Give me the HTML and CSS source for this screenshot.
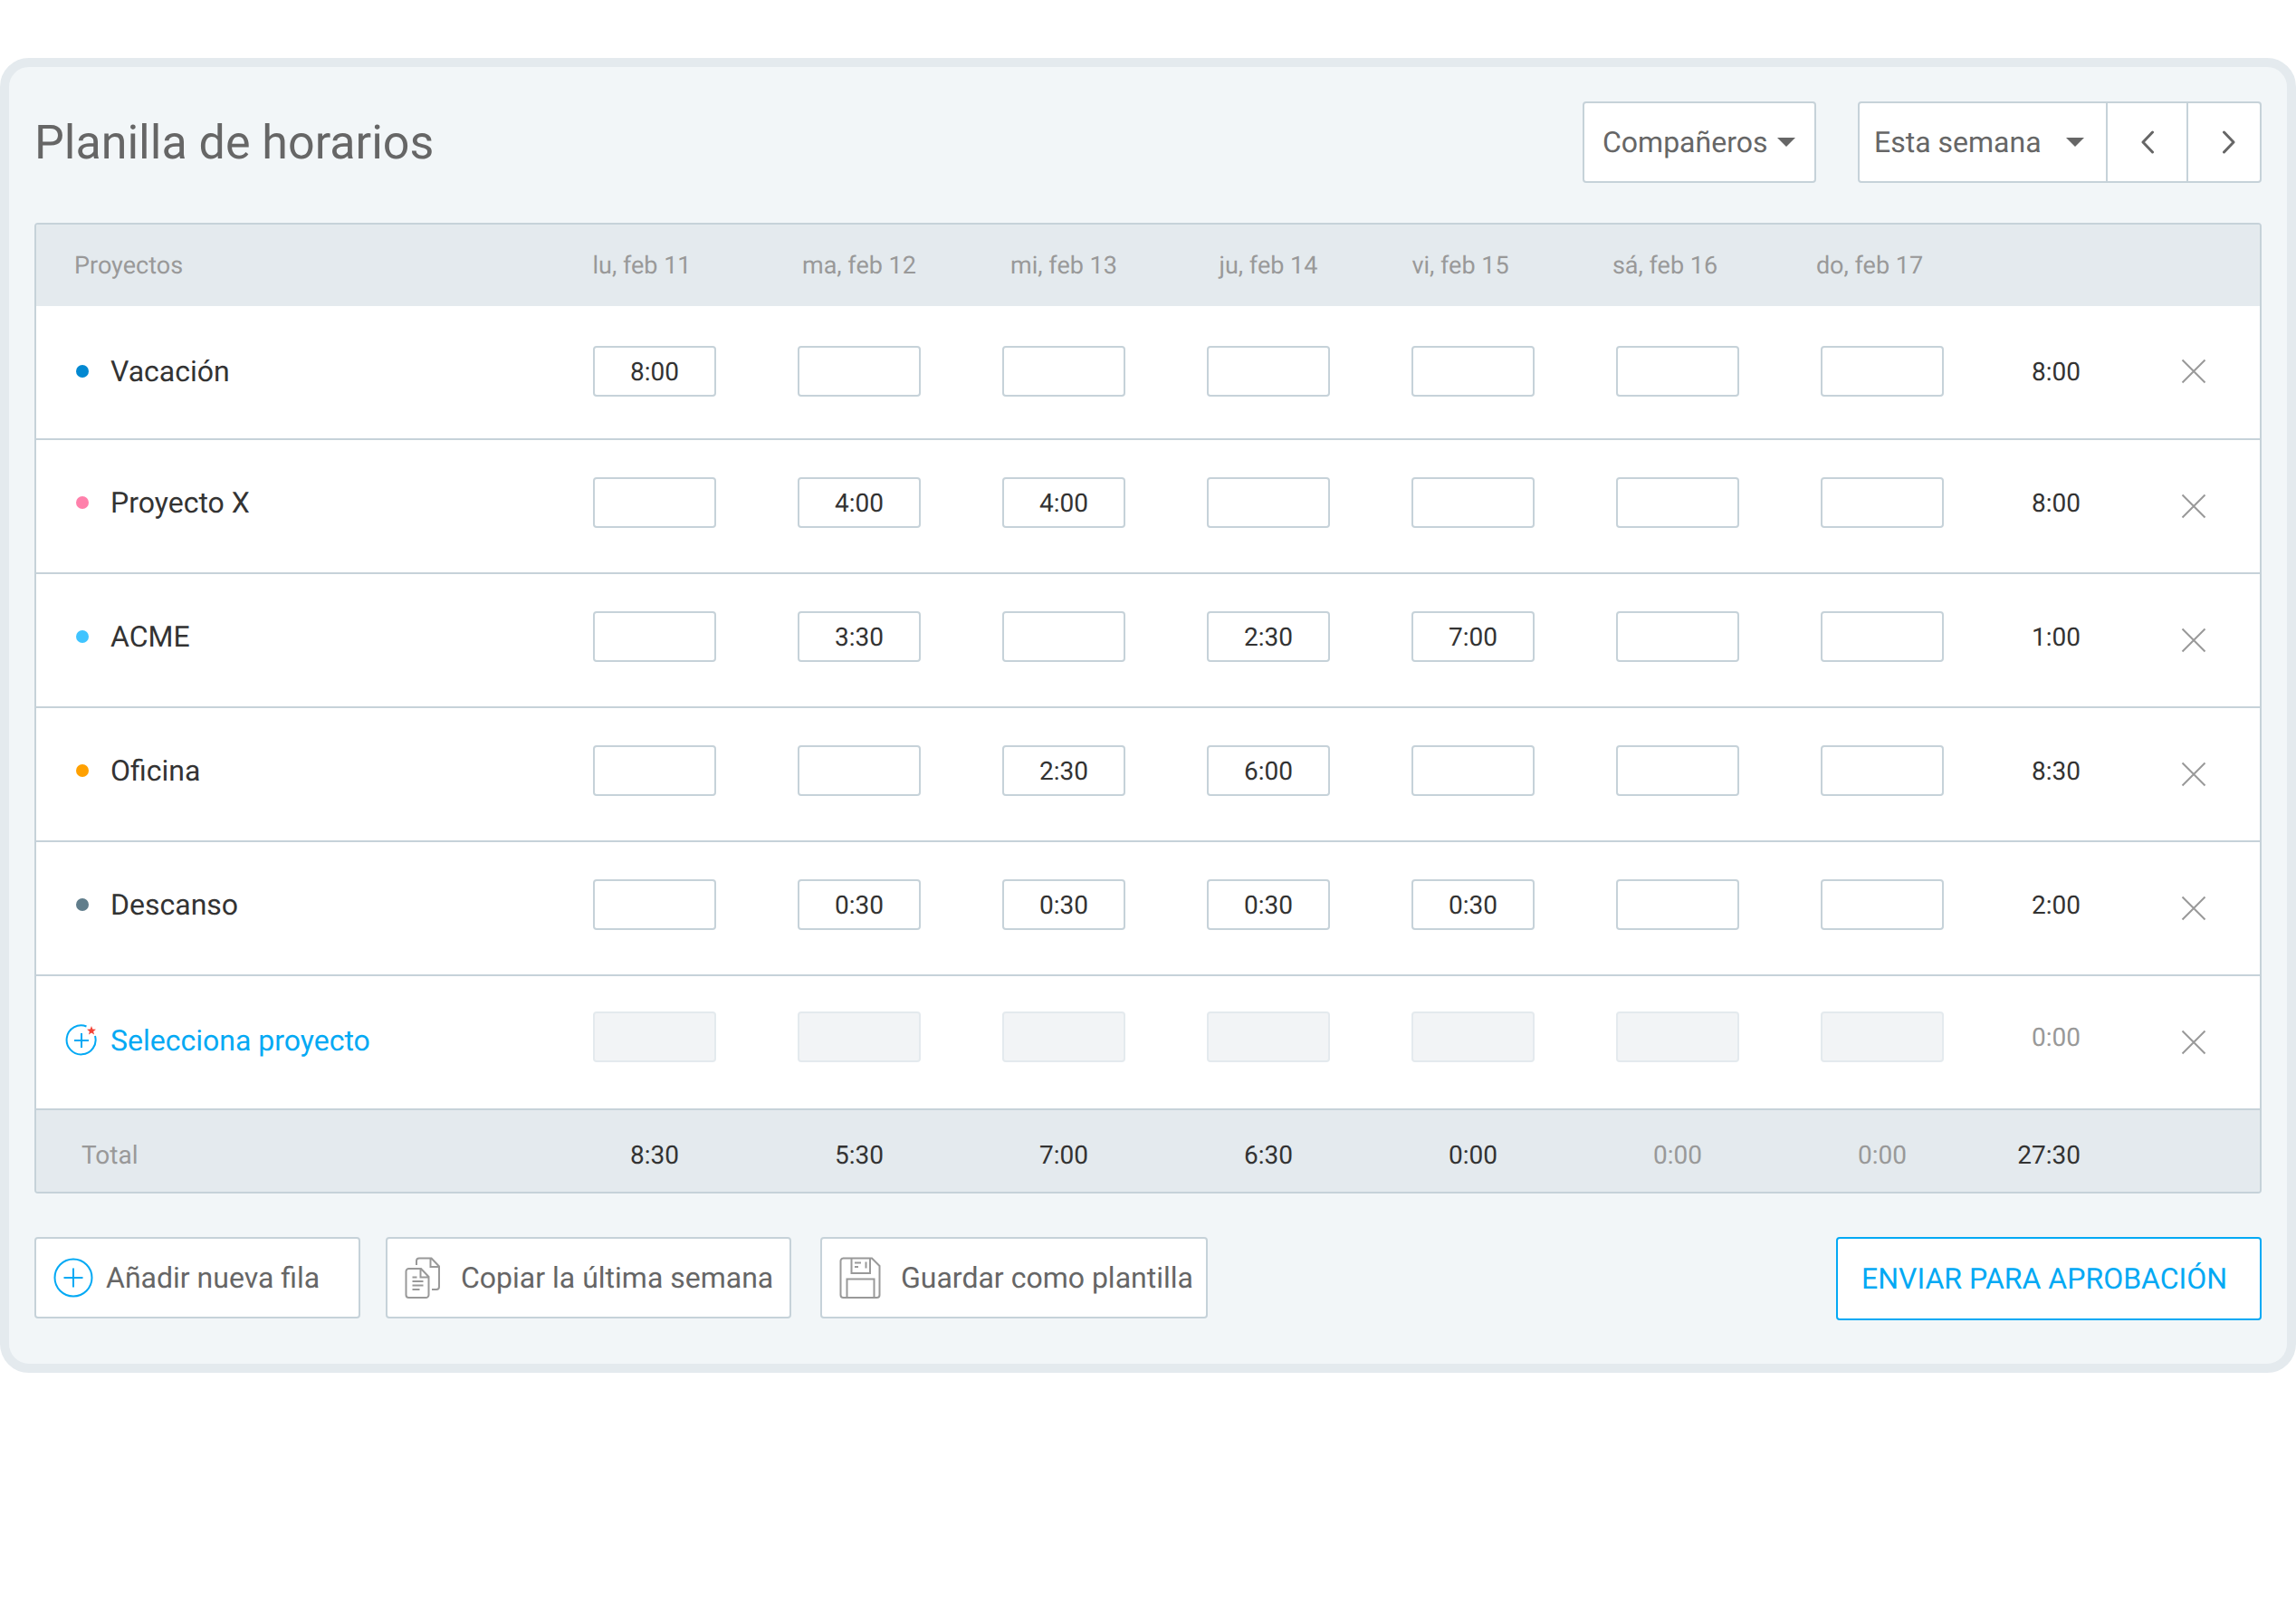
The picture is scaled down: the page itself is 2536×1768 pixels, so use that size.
FILE: index.html
```html
<!DOCTYPE html>
<html lang="es">
<head>
<meta charset="UTF-8">
<meta name="viewport" content="width=device-width, initial-scale=1.0">
<title>Planilla de horarios</title>
<link rel="stylesheet" href="styles.css">
</head>
<body>

<main class="card">
  <!-- Cabecera -->
  <header class="toolbar">
    <h1>Planilla de horarios</h1>
    <div class="select team">
      <select aria-label="Compañeros"><option>Compañeros</option></select>
      <svg class="caret" viewBox="0 0 20 10"><path d="M0 0h20L10 10z"/></svg>
    </div>
    <div class="week">
      <div class="select">
        <select aria-label="Semana"><option>Esta semana</option></select>
        <svg class="caret" viewBox="0 0 20 10"><path d="M0 0h20L10 10z"/></svg>
      </div>
      <button class="prev" aria-label="Semana anterior">
        <svg class="chevron" viewBox="0 0 14 26"><path d="M12.500 2L2 13l10.500 11"/></svg>
      </button>
      <button class="next" aria-label="Semana siguiente">
        <svg class="chevron" viewBox="0 0 14 26"><path d="M1.500 2L12 13 1.500 24"/></svg>
      </button>
    </div>
  </header>

  <!-- Tabla de horas -->
  <table class="sheet">
    <thead>
      <tr>
        <th class="name">Proyectos</th>
        <th class="day day-start">lu, feb 11</th>
        <th class="day">ma, feb 12</th>
        <th class="day">mi, feb 13</th>
        <th class="day">ju, feb 14</th>
        <th class="day day-start">vi, feb 15</th>
        <th class="day day-start">sá, feb 16</th>
        <th class="day day-start">do, feb 17</th>
        <th class="sum"></th>
        <th class="remove"></th>
      </tr>
    </thead>
    <tbody id="rows"></tbody>
    <tfoot>
      <tr>
        <td class="name">Total</td>
        <td>8:30</td>
        <td>5:30</td>
        <td>7:00</td>
        <td>6:30</td>
        <td>0:00</td>
        <td class="empty">0:00</td>
        <td class="empty">0:00</td>
        <td class="sum">27:30</td>
        <td></td>
      </tr>
    </tfoot>
  </table>

  <!-- Acciones -->
  <footer class="actions">
    <button class="btn add">
      <svg class="icon-blue" width="44" height="44" viewBox="0 0 44 44">
        <circle cx="22" cy="22" r="20.500"/>
        <path d="M22 11.500v21M11.500 22h21"/>
      </svg>
      Añadir nueva fila
    </button>
    <button class="btn copy">
      <svg class="icon-gray" width="40" height="46" viewBox="0 0 40 46">
        <path d="M13 9V4.500a3 3 0 0 1 3-3h13.500l8.500 9V33a3 3 0 0 1-3 3h-5M28.500 1.500v9.500H38"/>
        <path d="M4.500 13H18l8.500 9v20a3 3 0 0 1-3 3h-19a3 3 0 0 1-3-3V16a3 3 0 0 1 3-3zM17.500 13v9.500h9M8.500 22.500h5M8.500 27h12M8.500 31.500h12M8.500 36h8"/>
      </svg>
      Copiar la última semana
    </button>
    <button class="btn save">
      <svg class="icon-gray" width="46" height="46" viewBox="0 0 46 46">
        <path d="M4 1.500h32l8.500 8.500v32a3 3 0 0 1-3 3H4.500a3 3 0 0 1-3-3V4.500a3 3 0 0 1 3-3z"/>
        <path d="M13.500 1.500V18H34V1.500M8.500 45V24.500h30V45M17 6.500h7M17 11h4M29.500 5.500v7"/>
      </svg>
      Guardar como plantilla
    </button>
    <button class="btn send">ENVIAR PARA APROBACIÓN</button>
  </footer>
</main>

<script>
const days = ["lu", "ma", "mi", "ju", "vi", "sá", "do"];
const projects = [
  { name: "Vacación", dot: "blue", hours: ["8:00", "", "", "", "", "", ""], sum: "8:00" },
  { name: "Proyecto X", dot: "pink", hours: ["", "4:00", "4:00", "", "", "", ""], sum: "8:00" },
  { name: "ACME", dot: "sky", hours: ["", "3:30", "", "2:30", "7:00", "", ""], sum: "1:00" },
  { name: "Oficina", dot: "orange", hours: ["", "", "2:30", "6:00", "", "", ""], sum: "8:30" },
  { name: "Descanso", dot: "slate", hours: ["", "0:30", "0:30", "0:30", "0:30", "", ""], sum: "2:00" }
];

// Botón de borrar fila
const removeCell = `<td class="remove"><button aria-label="Eliminar fila">
  <svg width="28" height="28" viewBox="0 0 28 28"><path d="M1.500 1.500l25 25M26.500 1.500l-25 25"/></svg>
</button></td>`;

// Filas de proyectos
const rows = projects.map(p => `<tr>
  <td class="name"><span class="label"><i class="dot ${p.dot}"></i>${p.name}</span></td>
  ${p.hours.map((h, i) => `<td><input type="text" value="${h}" aria-label="${p.name}, ${days[i]}"></td>`).join("")}
  <td class="sum">${p.sum}</td>
  ${removeCell}
</tr>`);

// Fila para elegir un proyecto nuevo
rows.push(`<tr class="new-row">
  <td class="name"><a href="#" class="label">
    <svg class="icon-blue" width="36" height="36" viewBox="0 0 36 36">
      <path d="M23.500 2.500A16 16 0 1 0 33 13M18 10v16M10 18h16"/>
      <path class="star" d="M29 2l1.300 3.500 3.700.2-2.900 2.300 1 3.600-3.100-2-3.100 2 1-3.600L24 5.700l3.700-.2z"/>
    </svg>Selecciona proyecto</a></td>
  ${days.map(d => `<td><input type="text" disabled aria-label="Proyecto nuevo, ${d}"></td>`).join("")}
  <td class="sum empty">0:00</td>
  ${removeCell}
</tr>`);

document.getElementById("rows").innerHTML = rows.join("");
</script>
</body>
</html>
```
FILE: styles.css
```css
* {
  box-sizing: border-box;
}
body {
  margin: 0;
  padding-top: 64px;
  background-color: #fff;
  color: #333;
  font-family: Roboto, sans-serif;
  font-size: 28px;
  text-rendering: geometricPrecision;
}
button, input, select {
  font-family: inherit;
  font-size: inherit;
  color: inherit;
  text-rendering: inherit;
  margin: 0;
}
button {
  cursor: pointer;
}
svg {
  display: block;
  flex: none;
  fill: none;
}
.card {
  padding: 38px 28px 48px;
  background-color: #f2f6f8;
  border: 10px solid #e4eaee;
  border-radius: 32px;
}

/* cabecera */
.toolbar {
  display: flex;
  align-items: center;
  margin-bottom: 44px;
  color: #666;
  font-size: 32px;
}
h1 {
  margin: 0 auto 0 0;
  font-size: 52px;
  font-weight: 400;
}
.select {
  position: relative;
}
.select select {
  appearance: none;
  width: 100%;
  height: 90px;
  padding: 0 20px;
  background-color: #fff;
  border: 2px solid #c6d2d9;
  border-radius: 4px;
}
.caret {
  position: absolute;
  right: 23px;
  top: 40px;
  width: 20px;
  height: 10px;
  fill: #666;
}
.team {
  width: 258px;
  margin-right: 46px;
}
.week {
  display: flex;
}
.week .select {
  width: 276px;
}
.week select {
  padding: 0 16px;
  border-radius: 4px 0 0 4px;
}
.week .caret {
  right: 26px;
}
.week button {
  display: flex;
  align-items: center;
  justify-content: center;
  height: 90px;
  padding: 0;
  background-color: #fff;
  border: 2px solid #c6d2d9;
  border-left: 0;
}
.prev {
  width: 89px;
}
.week .next {
  width: 81px;
  padding-left: 10px;
  border-radius: 0 4px 4px 0;
}
.chevron {
  width: 14px;
  height: 26px;
  stroke: #666;
  stroke-width: 3;
  stroke-linecap: round;
  stroke-linejoin: round;
}

/* tabla */
.sheet {
  width: 100%;
  table-layout: fixed;
  border: 2px solid #c6d2d9;
  border-radius: 4px;
  border-spacing: 0;
  overflow: hidden;
  text-align: center;
}
th, td {
  padding: 0;
}
th {
  height: 90px;
  background-color: #e4eaee;
  color: #999;
  font-size: 27px;
  font-weight: 400;
}
.day {
  width: 226px;
}
.day-start {
  padding-right: 28px;
}
th.sum {
  width: 158px;
}
th.remove {
  width: 146px;
}
th.name {
  padding-left: 42px;
}
.name {
  text-align: left;
}
tbody td {
  height: 148px;
  padding-bottom: 8px;
  background-color: #fff;
  border-bottom: 2px solid #c6d2d9;
}
tbody tr:first-child td {
  padding-bottom: 2px;
}
tbody .name {
  padding-left: 44px;
  font-size: 32px;
}
.label {
  display: flex;
  align-items: center;
  gap: 24px;
}
.dot {
  width: 14px;
  height: 14px;
  border-radius: 50%;
}
.blue { background-color: #0288d1; }
.pink { background-color: #ff80ab; }
.sky { background-color: #40c4ff; }
.orange { background-color: #ffa000; }
.slate { background-color: #607d8b; }
input {
  display: block;
  width: 136px;
  height: 56px;
  margin: 0 auto;
  padding: 0;
  background-color: #fff;
  border: 2px solid #c6d2d9;
  border-radius: 4px;
  text-align: center;
}
input:disabled {
  background-color: #f2f4f6;
  border-color: #e4eaee;
}
td.sum {
  padding-right: 52px;
  text-align: right;
}
tbody td.remove {
  padding-bottom: 0;
}
.remove button {
  display: block;
  margin: 0 auto;
  padding: 0;
  background: none;
  border: 0;
}
.remove svg {
  stroke: #999;
  stroke-width: 2;
}
.empty {
  color: #999;
}

/* fila nueva */
tbody .new-row td {
  padding-bottom: 12px;
}
tbody .new-row .name {
  padding: 0 0 4px 32px;
}
tbody .new-row .remove {
  padding-bottom: 0;
}
.new-row .label {
  gap: 14px;
  color: #03a9f4;
  text-decoration: none;
}
.star {
  fill: #f44336;
  stroke: none;
}

tfoot td {
  height: 90px;
  padding-top: 8px;
  background-color: #e4eaee;
}
tfoot .name {
  padding-left: 50px;
  color: #999;
}

/* acciones */
.actions {
  display: flex;
  align-items: flex-start;
  margin-top: 48px;
}
.btn {
  display: flex;
  align-items: center;
  height: 90px;
  padding: 0 12px 0 19px;
  background-color: #fff;
  border: 2px solid #c6d2d9;
  border-radius: 4px;
  color: #666;
  font-size: 32px;
  white-space: nowrap;
}
.add {
  min-width: 360px;
  margin-right: 28px;
  gap: 14px;
}
.copy {
  min-width: 448px;
  margin-right: 32px;
  gap: 22px;
}
.save {
  min-width: 428px;
  gap: 22px;
}
.send {
  min-width: 470px;
  height: 92px;
  margin-left: auto;
  padding: 0 26px;
  border-color: #03a9f4;
  color: #03a9f4;
}
.icon-blue {
  stroke: #03a9f4;
  stroke-width: 2;
}
.icon-gray {
  stroke: #999;
  stroke-width: 2;
}
```
